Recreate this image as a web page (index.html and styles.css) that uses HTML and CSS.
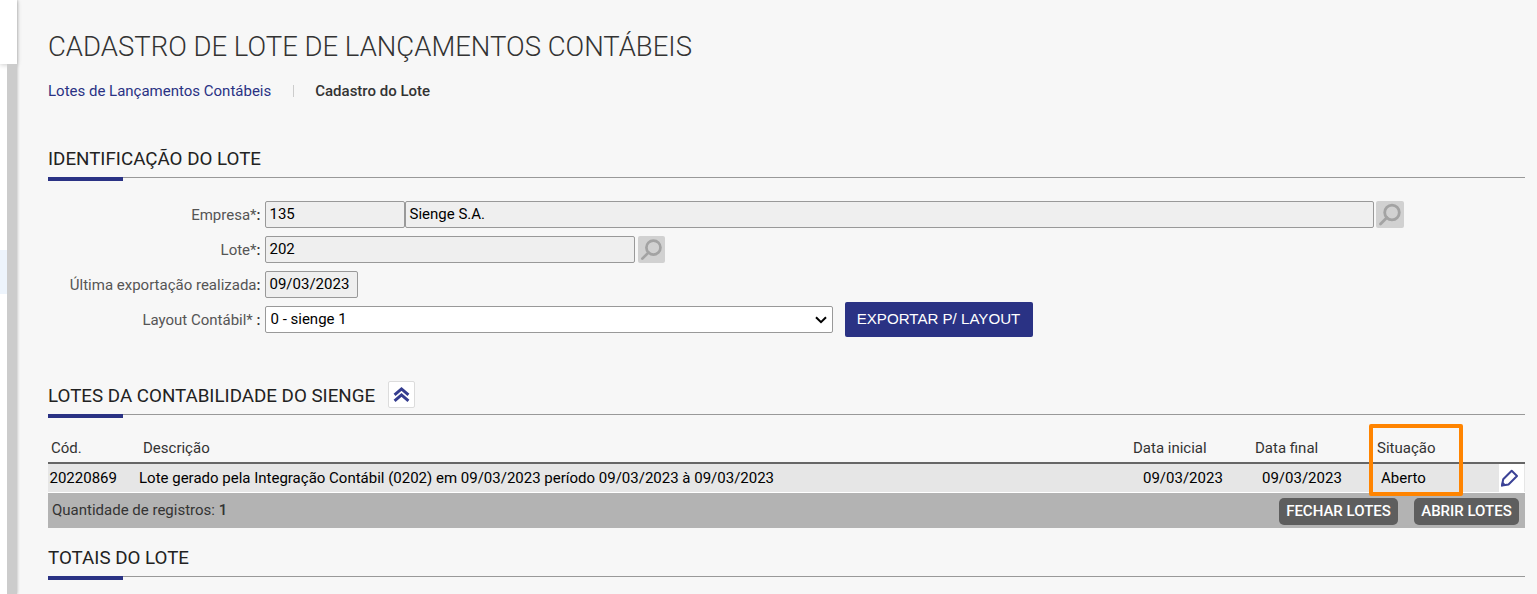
FILE: index.html
```html
<!DOCTYPE html>
<html lang="pt-br">
<head>
  <meta charset="UTF-8">
  <meta name="viewport" content="width=device-width,initial-scale=1.0">
  <title>Cadastro de Lote de Lançamentos Contábeis</title>
  <link rel="stylesheet" href="styles.css">
</head>
<body>
  <aside class="sidebar">
    <div class="sidebar-top"></div>
    <div class="sidebar-body">
      <div class="sidebar-menu"><div class="menu-active"></div></div>
      <div class="scrollbar"></div>
    </div>
  </aside>
  <main class="content">
    <h1>CADASTRO DE LOTE DE LANÇAMENTOS CONTÁBEIS</h1>
    <nav class="tabs">
      <a class="tab">Lotes de Lançamentos Contábeis</a>
      <span class="tab active">Cadastro do Lote</span>
    </nav>

    <h2 class="section-title"><span>IDENTIFICAÇÃO DO LOTE</span></h2>
    <form class="form">
      <div class="row">
        <label>Empresa*<b>:</b></label>
        <div class="field codigo">135</div>
        <div class="field empresa">Sienge S.A.</div>
        <svg class="lupa" viewBox="0 0 28 27"><path d="M11 16.5L4.5 23" /><circle cx="16" cy="11.5" r="7.3" /></svg>
      </div>
      <div class="row">
        <label>Lote*<b>:</b></label>
        <div class="field lote">202</div>
        <svg class="lupa" viewBox="0 0 28 27"><path d="M11 16.5L4.5 23" /><circle cx="16" cy="11.5" r="7.3" /></svg>
      </div>
      <div class="row">
        <label>Última exportação realizada<b>:</b></label>
        <div class="field data">09/03/2023</div>
      </div>
      <div class="row">
        <label>Layout Contábil* <b>:</b></label>
        <div class="field layout">0 - sienge 1
          <svg class="seta" viewBox="0 0 12 8"><path d="M1 1.2L6 6.2L11 1.2" /></svg>
        </div>
        <button type="button" class="btn-exportar">EXPORTAR P/ LAYOUT</button>
      </div>
    </form>

    <h2 class="section-title lotes">
      <span>LOTES DA CONTABILIDADE DO SIENGE</span>
      <svg class="recolher" viewBox="0 0 27 27"><path d="M6 14L13.5 7.5L21 14M6 20.5L13.5 14L21 20.5" /></svg>
    </h2>
    <div class="tabela">
      <div class="linha cabecalho">
        <span>Cód.</span><span>Descrição</span><span>Data inicial</span><span>Data final</span><span>Situação</span>
        <div class="destaque"></div>
      </div>
      <div class="linha registro">
        <span>20220869</span>
        <span>Lote gerado pela Integração Contábil (0202) em 09/03/2023 período 09/03/2023 à 09/03/2023</span>
        <span>09/03/2023</span><span>09/03/2023</span><span>Aberto</span>
        <span class="editar"><svg viewBox="0 0 25 28"><path d="M3 21.5L4.2 15.3L12.7 6.8L18 12L9.5 20.5Z" /><path class="ponta" d="M2 22.5L3.2 17.3L7.4 21.3Z" /></svg></span>
      </div>
      <div class="rodape">
        <span class="total">Quantidade de registros: <b>1</b></span>
        <button type="button" class="btn-lote fechar">FECHAR LOTES</button>
        <button type="button" class="btn-lote abrir">ABRIR LOTES</button>
      </div>
    </div>

    <h2 class="section-title totais"><span>TOTAIS DO LOTE</span></h2>
  </main>
</body>
</html>
```

FILE: styles.css
```css
:root {
  --azul: #2a3284;
  --fundo: #f7f7f7;
  --borda: #999;
}
* { box-sizing: border-box; }
body {
  margin: 0;
  height: 594px;
  display: flex;
  overflow: hidden;
  background: var(--fundo);
  font-family: Roboto, sans-serif;
  font-size: 15px;
  color: #333;
}
.sidebar {
  width: 17px;
  flex-shrink: 0;
  display: flex;
  flex-direction: column;
  background: #fff;
  box-shadow: 0 0 3px rgba(0,0,0,.3);
}
.sidebar-top {
  height: 64px;
  box-shadow: 0 1px 5px rgba(0,0,0,.2);
}
.sidebar-body { flex: 1; display: flex; }
.sidebar-menu { width: 7px; padding-top: 186px; }
.menu-active { height: 44px; background: #edf4fc; }
.scrollbar { width: 10px; background: #ccc; }

.content {
  flex: 1;
  padding: 30px 12px 0 31px;
}
h1 {
  margin: 0;
  height: 34px;
  line-height: 34px;
  font-size: 27.5px;
  font-weight: 300;
  white-space: nowrap;
}
.tabs {
  display: flex;
  margin-top: 17px;
  height: 20px;
  line-height: 20px;
}
.tab { color: var(--azul); }
.tab.active {
  display: flex;
  align-items: center;
  color: #333;
  font-weight: 500;
}
.tab.active::before {
  content: "";
  width: 1px;
  height: 12px;
  margin: 0 21px 0 22px;
  background: #ccc;
}
.section-title {
  display: flex;
  align-items: center;
  margin: 37px 0 0;
  height: 40px;
  border-bottom: 1px solid var(--borda);
  font-size: 18.75px;
  font-weight: 400;
  color: #222;
  position: relative;
}
.section-title span { padding-top: 2px; }
.section-title::after {
  content: "";
  position: absolute;
  left: 0;
  bottom: -4px;
  width: 75px;
  height: 4px;
  background: var(--azul);
}
.form {
  display: flex;
  flex-direction: column;
  gap: 8px;
  margin-top: 23px;
}
.row { display: flex; height: 27px; }
.row label {
  width: 213px;
  margin-right: 4px;
  padding-right: 0.5px;
  text-align: right;
  line-height: 28px;
  color: #555;
}
.row label b { font-weight: 500; color: #333; }
.field {
  padding-left: 3.5px;
  border: 1px solid var(--borda);
  border-radius: 2px;
  background: #efefef;
  line-height: 24px;
  color: #000;
}
.codigo { width: 140px; }
.empresa { width: 969px; }
.lote { width: 370px; }
.data { width: 93px; }
.layout {
  display: flex;
  justify-content: space-between;
  width: 568px;
  padding: 0 5px 0 4.5px;
  background: #fff;
}
.seta { width: 12px; height: 8px; margin-top: 9px; fill: none; stroke: #000; stroke-width: 2; }
.lupa {
  width: 28px;
  height: 27px;
  margin-left: 2px;
  border-radius: 2px;
  background: #d1d1d1;
  fill: none;
  stroke: #a3a3a3;
  stroke-width: 2.8;
  stroke-linecap: round;
}
.lote + .lupa { width: 27px; margin-left: 3px; }
.btn-exportar {
  width: 188px;
  height: 35px;
  margin: -4px 0 0 12px;
  padding: 0 1px 2px 0;
  border: 0;
  border-radius: 2px;
  background: var(--azul);
  color: #fff;
  font: 15.1px "Liberation Sans", sans-serif;
}
.section-title.lotes { margin-top: 42px; }
.recolher {
  width: 27px;
  height: 27px;
  margin-left: 13px;
  border: 1px solid #dcdcdc;
  border-radius: 2px;
  background: #fff;
  fill: none;
  stroke: #353d8f;
  stroke-width: 3.2;
}
.tabela { margin-top: 17px; }
.linha { display: grid; }
.cabecalho {
  position: relative;
  height: 32px;
  padding-left: 3px;
  line-height: 32px;
  border-bottom: 2px solid #666;
  grid-template-columns: 92px 990px 122px 122px 1fr;
}
.registro {
  height: 29px;
  padding-left: 1.5px;
  line-height: 28px;
  border-bottom: 1px solid #fff;
  background: #e6e6e6;
  color: #000;
  grid-template-columns: 89.5px 1004px 119px 119px 118px 25px;
}
.editar {
  height: 28px;
  background: #fff;
}
.editar svg {
  display: block;
  width: 25px;
  height: 28px;
  fill: none;
  stroke: #3b4296;
  stroke-width: 2;
  stroke-linejoin: round;
}
.editar .ponta { fill: #3b4296; stroke: none; }
.destaque {
  position: absolute;
  z-index: 2;
  left: 1320.5px;
  top: -8.5px;
  width: 94px;
  height: 72px;
  border: 4px solid #ff8400;
  border-radius: 2px;
}
.rodape {
  display: flex;
  height: 35px;
  padding: 5px 6px 0 4px;
  background: #b3b3b3;
}
.total { flex: 1; line-height: 24px; }
.total b { font-weight: 500; }
.btn-lote {
  height: 27px;
  padding: 0 0 2px;
  border: 0;
  border-radius: 5px;
  background: #5e5e5e;
  color: #fff;
  font: 500 15px Roboto, sans-serif;
}
.fechar { width: 119px; }
.abrir { width: 105px; margin-left: 16px; }
.section-title.totais { margin-top: 9px; }
```
